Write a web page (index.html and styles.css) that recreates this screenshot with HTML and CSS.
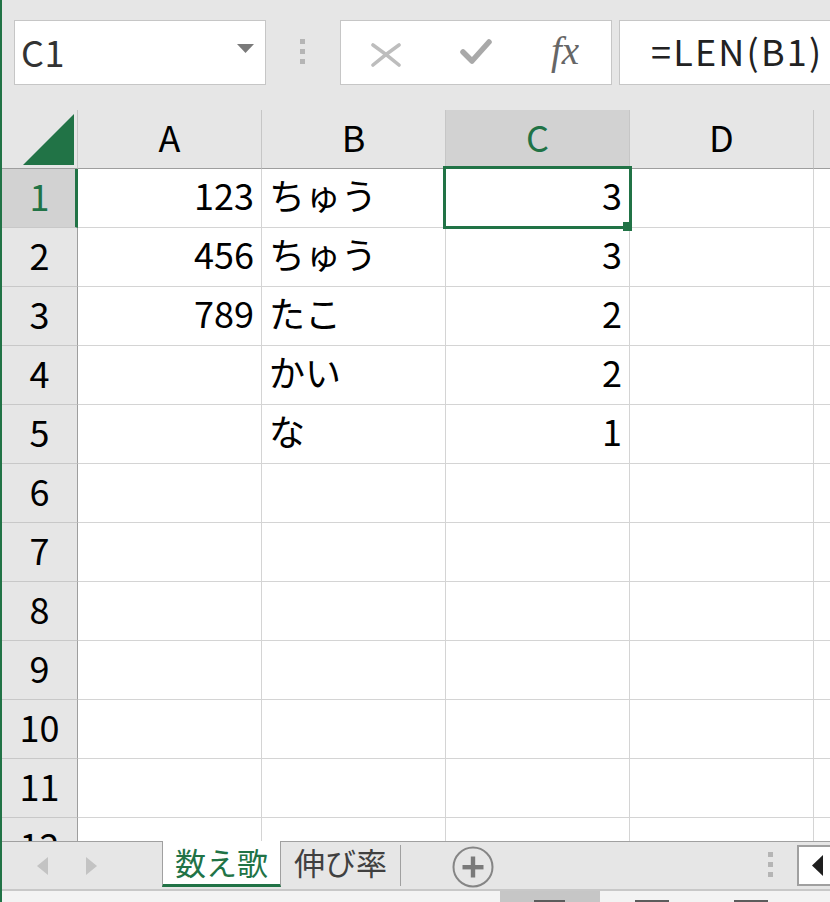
FILE: index.html
```html
<!DOCTYPE html>
<html lang="ja">
<head>
<meta charset="utf-8">
<title>Excel</title>
<link rel="stylesheet" href="styles.css">
</head>
<body>
<div class="app">
  <div class="formula-bar">
    <div class="name-box">
      <span class="name">C1</span>
      <svg class="dd" width="17" height="9" viewBox="0 0 17 9"><polygon points="0,0 17,0 8.5,9" fill="#7a7a7a"/></svg>
    </div>
    <div class="grip"><i></i><i></i><i></i></div>
    <div class="fx-buttons">
      <svg class="ic-x" width="30" height="24" viewBox="0 0 30 24"><path d="M2 2 Q15 11 28 22 M28 2 Q15 11 2 22" stroke="#bdbdbd" stroke-width="3.6" fill="none" stroke-linecap="round"/></svg>
      <svg class="ic-ok" width="32" height="26" viewBox="0 0 32 26"><polyline points="3,13 12,22 29,3" stroke="#a9a9a9" stroke-width="5.5" fill="none" stroke-linecap="round" stroke-linejoin="round"/></svg>
      <span class="fx">fx</span>
    </div>
    <div class="formula">=LEN(B1)</div>
  </div>

  <div class="sheet">
    <div class="row head">
      <div class="corner"><svg width="51" height="51" viewBox="0 0 51 51"><polygon points="51,0 51,51 0,51" fill="#217346"/></svg></div>
      <div class="ch">A</div>
      <div class="ch">B</div>
      <div class="ch sel">C</div>
      <div class="ch">D</div>
      <div class="ch last"></div>
    </div>
    <div class="row"><div class="rh sel">1</div><div class="c num">123</div><div class="c">ちゅう</div><div class="c num">3</div><div class="c"></div><div class="c last"></div></div>
    <div class="row"><div class="rh">2</div><div class="c num">456</div><div class="c">ちゅう</div><div class="c num">3</div><div class="c"></div><div class="c last"></div></div>
    <div class="row"><div class="rh">3</div><div class="c num">789</div><div class="c">たこ</div><div class="c num">2</div><div class="c"></div><div class="c last"></div></div>
    <div class="row"><div class="rh">4</div><div class="c num"></div><div class="c">かい</div><div class="c num">2</div><div class="c"></div><div class="c last"></div></div>
    <div class="row"><div class="rh">5</div><div class="c num"></div><div class="c">な</div><div class="c num">1</div><div class="c"></div><div class="c last"></div></div>
    <div class="row"><div class="rh">6</div><div class="c"></div><div class="c"></div><div class="c"></div><div class="c"></div><div class="c last"></div></div>
    <div class="row"><div class="rh">7</div><div class="c"></div><div class="c"></div><div class="c"></div><div class="c"></div><div class="c last"></div></div>
    <div class="row"><div class="rh">8</div><div class="c"></div><div class="c"></div><div class="c"></div><div class="c"></div><div class="c last"></div></div>
    <div class="row"><div class="rh">9</div><div class="c"></div><div class="c"></div><div class="c"></div><div class="c"></div><div class="c last"></div></div>
    <div class="row"><div class="rh">10</div><div class="c"></div><div class="c"></div><div class="c"></div><div class="c"></div><div class="c last"></div></div>
    <div class="row"><div class="rh">11</div><div class="c"></div><div class="c"></div><div class="c"></div><div class="c"></div><div class="c last"></div></div>
    <div class="row"><div class="rh">12</div><div class="c"></div><div class="c"></div><div class="c"></div><div class="c"></div><div class="c last"></div></div>
    <div class="selection"><i class="handle"></i></div>
  </div>

  <div class="tabs">
    <svg class="nav-l" width="11" height="18" viewBox="0 0 11 18"><polygon points="11,0 11,18 0,9" fill="#c3c3c3"/></svg>
    <svg class="nav-r" width="11" height="18" viewBox="0 0 11 18"><polygon points="0,0 0,18 11,9" fill="#c3c3c3"/></svg>
    <div class="tab active">数え歌</div>
    <div class="tab second">伸び率</div>
    <svg class="add" width="42" height="42" viewBox="0 0 42 42"><circle cx="21" cy="21" r="19.5" fill="none" stroke="#858585" stroke-width="2"/><rect x="10.5" y="19" width="21" height="4.4" fill="#7a7a7a"/><rect x="18.8" y="10.5" width="4.4" height="21" fill="#7a7a7a"/></svg>
    <div class="grip2"><i></i><i></i><i></i></div>
    <div class="scroll"><svg width="11" height="21" viewBox="0 0 11 21"><polygon points="11,0 11,21 0,10.5" fill="#1e1e1e"/></svg></div>
  </div>

  <div class="status">
    <div class="view-active"><span class="vi v1"></span></div>
    <span class="vi v2"></span>
    <span class="vi v3"><i></i><i></i></span>
  </div>
</div>
</body>
</html>
```

FILE: styles.css
```css
* { box-sizing: border-box; }
html, body { margin: 0; padding: 0; }
body {
  width: 830px;
  height: 902px;
  overflow: hidden;
  background: #e6e6e6;
  font-family: "Noto Sans CJK JP", "Noto Sans", sans-serif;
  color: #000;
}
.app {
  height: 902px;
  border-left: 2px solid #217346;
  display: flex;
  flex-direction: column;
}

/* formula bar */
.formula-bar {
  height: 110px;
  flex: none;
  display: flex;
  align-items: flex-start;
  padding: 20px 0 0 12px;
}
.name-box {
  width: 252px;
  height: 65px;
  flex: none;
  background: #fff;
  border: 1px solid #c6c6c6;
  display: flex;
  align-items: center;
  justify-content: space-between;
  padding: 0 11px 0 6px;
  font-size: 36px;
  color: #333;
}
.name { line-height: 1; margin-top: -3px; letter-spacing: 0.5px; }
.dd { margin-top: -8px; }
.grip {
  display: flex;
  flex-direction: column;
  gap: 5px;
  margin: 19px 35px 0 34px;
}
.grip i, .grip2 i {
  display: block;
  width: 5px;
  height: 5px;
  background: #b5b5b5;
}
.fx-buttons {
  width: 272px;
  height: 65px;
  flex: none;
  background: #fff;
  border: 1px solid #c6c6c6;
  display: flex;
  align-items: center;
  padding-left: 30px;
}
.ic-x { margin-top: 4px; }
.ic-ok { margin-left: 59px; margin-top: -1px; }
.fx {
  margin-left: 59px;
  font-family: "Liberation Serif", serif;
  font-style: italic;
  font-size: 39px;
  color: #666;
  margin-top: -4px;
}
.formula {
  flex: 1;
  margin-left: 7px;
  height: 65px;
  background: #fff;
  border: 1px solid #c6c6c6;
  border-right: none;
  display: flex;
  align-items: center;
  padding: 0 0 5px 31px;
  font-size: 36px;
  letter-spacing: 2.2px;
  color: #222;
  white-space: nowrap;
  overflow: hidden;
}

/* sheet grid */
.sheet {
  height: 731px;
  flex: none;
  position: relative;
  overflow: hidden;
  background: #fff;
}
.row { display: flex; height: 59px; flex: none; }
.head { background: #e6e6e6; }
.corner {
  width: 76px;
  flex: none;
  border-right: 1px solid #c6c6c6;
  border-bottom: 1px solid #9e9e9e;
  display: flex;
  justify-content: flex-end;
  align-items: flex-end;
  padding: 0 3px 3px 0;
}
.ch {
  width: 184px;
  flex: none;
  border-right: 1px solid #c6c6c6;
  border-bottom: 1px solid #9e9e9e;
  display: flex;
  align-items: center;
  justify-content: center;
  padding-bottom: 7px;
  font-size: 36px;
}
.ch.last { flex: 1; border-right: none; }
.ch.sel { background: #d2d2d2; color: #217346; }
.rh {
  width: 76px;
  flex: none;
  background: #e6e6e6;
  border-right: 1px solid #9e9e9e;
  border-bottom: 1px solid #c8c8c8;
  display: flex;
  align-items: center;
  justify-content: center;
  padding-bottom: 7px;
  font-size: 36px;
}
.rh.sel { background: #d2d2d2; color: #217346; border-right: 3px solid #217346; padding-left: 2px; }
.c {
  width: 184px;
  flex: none;
  border-right: 1px solid #d4d4d4;
  border-bottom: 1px solid #d4d4d4;
  display: flex;
  align-items: center;
  padding: 0 7px 8px;
  font-size: 36px;
  white-space: nowrap;
}
.c.num { justify-content: flex-end; }
.c.last { flex: 1; border-right: none; }

.selection {
  position: absolute;
  left: 441px;
  top: 56px;
  width: 189px;
  height: 63px;
  border: 3px solid #217346;
}
.handle {
  position: absolute;
  right: -3px;
  bottom: -5px;
  width: 9px;
  height: 9px;
  background: #217346;
}

/* sheet tabs */
.tabs {
  height: 50px;
  flex: none;
  border-top: 1px solid #a0a0a0;
  border-bottom: 2px solid #c8c8c8;
  display: flex;
  align-items: flex-start;
}
.nav-l { margin: 15px 0 0 35px; flex: none; }
.nav-r { margin: 15px 0 0 38px; flex: none; }
.tab {
  flex: none;
  font-size: 31px;
  display: flex;
  align-items: center;
  justify-content: center;
  line-height: 1;
}
.tab.active {
  margin: -1px 0 0 65px;
  width: 119px;
  height: 46px;
  background: #fff;
  color: #217346;
  border-left: 1px solid #a0a0a0;
  border-right: 1px solid #a0a0a0;
  border-bottom: 3px solid #217346;
  padding-bottom: 2px;
}
.tab.second {
  margin-top: 3px;
  width: 120px;
  height: 41px;
  color: #404040;
  border-right: 1px solid #a0a0a0;
  padding-bottom: 8px;
}
.add { flex: none; margin: 4px 0 0 51px; }
.grip2 {
  display: flex;
  flex-direction: column;
  gap: 5px;
  margin: 10px 0 0 274px;
}
.scroll {
  flex: 1;
  margin: 3px 0 0 24px;
  height: 41px;
  background: #fff;
  border: 2px solid #a0a0a0;
  border-right: none;
  display: flex;
  align-items: center;
  padding-left: 13px;
}

/* status bar */
.status {
  height: 11px;
  flex: none;
  background: #f3f3f3;
  display: flex;
  align-items: flex-start;
  overflow: hidden;
}
.view-active {
  margin-left: 498px;
  width: 100px;
  height: 11px;
  background: #c6c6c6;
  padding: 9px 0 0 34px;
}
.vi {
  display: block;
  flex: none;
  height: 6px;
  border-top: 2px solid #5c5c5c;
  border-left: 1px solid #5c5c5c;
  border-right: 1px solid #5c5c5c;
}
.v1 { width: 31px; }
.v2 { width: 34px; margin: 9px 0 0 35px; }
.v3 { width: 34px; margin: 9px 0 0 65px; display: flex; justify-content: space-evenly; }
.v3 i { display: block; width: 1px; height: 6px; background: #5c5c5c; }
```
